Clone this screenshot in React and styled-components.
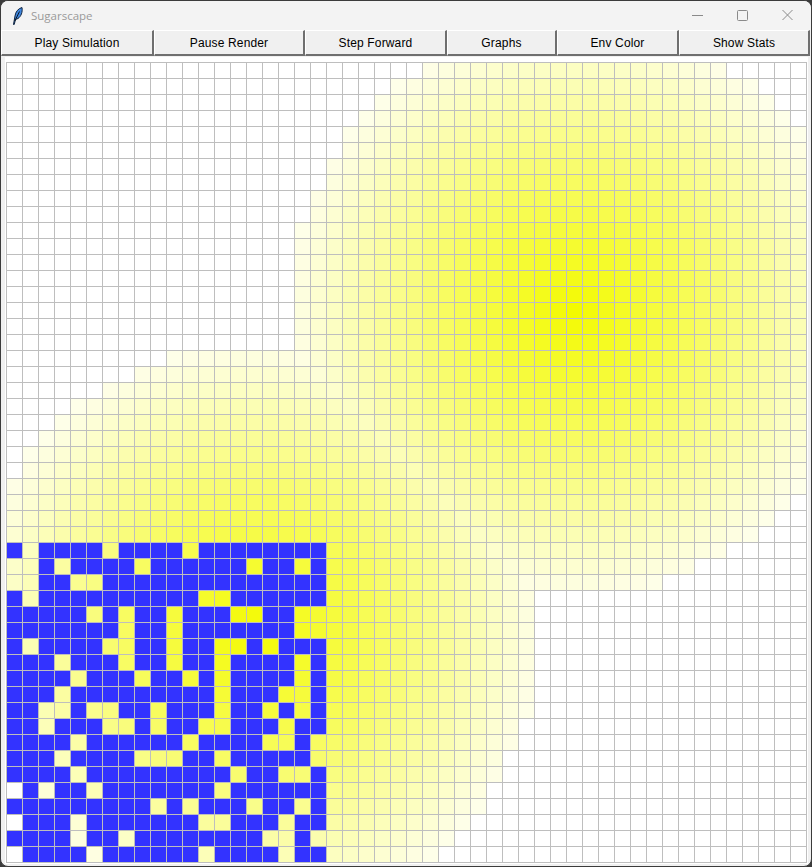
import React from 'react';
import styled, { createGlobalStyle } from 'styled-components';

const GlobalStyle = createGlobalStyle`
    html, body {
        margin: 0;
        padding: 0;
        background: #3b3b3b;
    }
`;

const BUTTONS = [
    { label: 'Play Simulation', width: 153 },
    { label: 'Pause Render', width: 151 },
    { label: 'Step Forward', width: 142 },
    { label: 'Graphs', width: 110 },
    { label: 'Env Color', width: 122 },
    { label: 'Show Stats', width: 131 },
];

// agents in the lower left block, X = blue cell
const AGENTS = [
    'X.XXXX.XXXX.XXXXXXXX',
    '..X.XXXX.XXXXXX.XX.X',
    '..XX..XXXXXXXXXXXXXX',
    'X.XXXXXXXXXX..XXXXXX',
    'XXXXX.X.XX.XXX..XX..',
    'XXXXXXX.XX.XXXXXXX..',
    'X.XXXX..XX.XX..X.XXX',
    'XXX.XXX.XX.XX.XXXX.X',
    'XXXX.XXX.XX.X.XXXX.X',
    'XXX.XXXXXXXXX.XXX..X',
    'XX..X..XX.XXX.XX.X.X',
    'XX.XXX..X.XX..XXX.XX',
    'XXXX.XXXXXX.XXXX..X.',
    'XXX.XXXX...XX.XXXXX.',
    'XXXX.XXXXXXXXX.XX..X',
    '.X.XX.XXXXXXX.XXXXXX',
    'XXXXXXXXX.X.XXX.XX.X',
    '.XXX.XXXXXXX..XXX.XX',
    'XXXX.XX.XXXXXXXX..X.',
    '.XXXX.XXXXXX.XXXX.XX',
];

const GRID_SIZE = 50;
const PEAKS = [[35, 15], [15, 35]];

const sugarColor = (col, row) => {
    const dist = Math.min(...PEAKS.map(([x, y]) => Math.hypot(col - x, row - y)));
    if (dist * dist > 320) return '#ffffff';
    const b = dist < 8 ? 12 * dist : 96 + 14 * (dist - 8);
    const level = 1 - b / 255;
    const r = Math.round(255 - 12 * level);
    const g = Math.round(255 - 5 * level);
    return `rgb(${r},${g},${Math.round(b)})`;
};

const cellColor = (col, row) => {
    const agentRow = AGENTS[row - 30];
    if (agentRow && agentRow[col] === 'X') return '#3333ff';
    return sugarColor(col, row);
};

const Window = styled.div`
    box-sizing: border-box;
    width: 812px;
    height: 867px;
    display: flex;
    flex-direction: column;
    background: #f0f0f0;
    border: 1px solid #3b3b3b;
    border-radius: 8px;
    overflow: hidden;
`;

const TitleBar = styled.header`
    height: 29px;
    flex: none;
    display: flex;
    align-items: center;
    background: #f3f3f3;
    padding-left: 9px;
`;

const AppTitle = styled.span`
    margin-left: 7px;
    font-family: "Open Sans", sans-serif;
    font-size: 11.5px;
    color: #9a9a9a;
`;

const WindowControls = styled.div`
    margin-left: auto;
    margin-right: 1px;
    display: flex;
    padding-bottom: 2px;
`;

const ControlButton = styled.div`
    width: 45px;
    height: 27px;
    display: flex;
    align-items: center;
    justify-content: center;
    color: #8a8a8a;
`;

const Toolbar = styled.nav`
    flex: none;
    display: flex;
    height: 26px;
`;

const ToolButton = styled.div`
    box-sizing: border-box;
    width: ${(props) => props.$width}px;
    display: flex;
    align-items: center;
    justify-content: center;
    background: #f0f0f0;
    border-top: 1px solid #ffffff;
    border-left: 1px solid #ffffff;
    border-right: 2px solid #6f6f6f;
    border-bottom: 2px solid #6f6f6f;
    font-family: "Liberation Sans", sans-serif;
    font-size: 12px;
    letter-spacing: 0.15px;
    color: #000000;
`;

const CanvasArea = styled.main`
    flex: 1;
    margin: 1px 3px 2px 4px;
    padding: 5px 1px 0 1px;
    background: #ffffff;
`;

const Grid = styled.div`
    display: grid;
    grid-template-columns: repeat(${GRID_SIZE}, 15px);
    grid-auto-rows: 15px;
    gap: 1px;
    width: 799px;
    padding: 1px;
    background: #bebebe;
`;

const Cell = styled.div``;

const FeatherIcon = () => (
    <svg width="14" height="18" viewBox="0 0 14 18">
        <path d="M3.5 17.5 L5 9 C5.5 5 8 1.5 12 0.5 C12.8 5 11 9.5 8 11.5 L5.5 12.5 L4.2 17.5 Z" fill="#3f86de" stroke="#10243f" strokeWidth="1" />
        <path d="M4.8 14 L9.5 4.5" stroke="#0b1520" strokeWidth="1" fill="none" />
    </svg>
);

const App = () => {
    const cells = [];
    for (let row = 0; row < GRID_SIZE; row++) {
        for (let col = 0; col < GRID_SIZE; col++) {
            cells.push(<Cell key={`${row}-${col}`} style={{ background: cellColor(col, row) }} />);
        }
    }

    return (
        <>
            <GlobalStyle />
            <Window>
                <TitleBar>
                    <FeatherIcon />
                    <AppTitle>Sugarscape</AppTitle>
                    <WindowControls>
                        <ControlButton>
                            <svg width="12" height="12" viewBox="0 0 12 12"><path d="M0 6.5H11" stroke="currentColor" fill="none" /></svg>
                        </ControlButton>
                        <ControlButton>
                            <svg width="12" height="12" viewBox="0 0 12 12"><rect x="0.5" y="1.5" width="10" height="10" rx="1" stroke="currentColor" fill="none" /></svg>
                        </ControlButton>
                        <ControlButton>
                            <svg width="12" height="12" viewBox="0 0 12 12"><path d="M0.5 1L10.5 11M10.5 1L0.5 11" stroke="currentColor" fill="none" /></svg>
                        </ControlButton>
                    </WindowControls>
                </TitleBar>
                <Toolbar>
                    {BUTTONS.map((button) => (
                        <ToolButton key={button.label} $width={button.width}>{button.label}</ToolButton>
                    ))}
                </Toolbar>
                <CanvasArea>
                    <Grid>{cells}</Grid>
                </CanvasArea>
            </Window>
        </>
    );
};

export default App;
